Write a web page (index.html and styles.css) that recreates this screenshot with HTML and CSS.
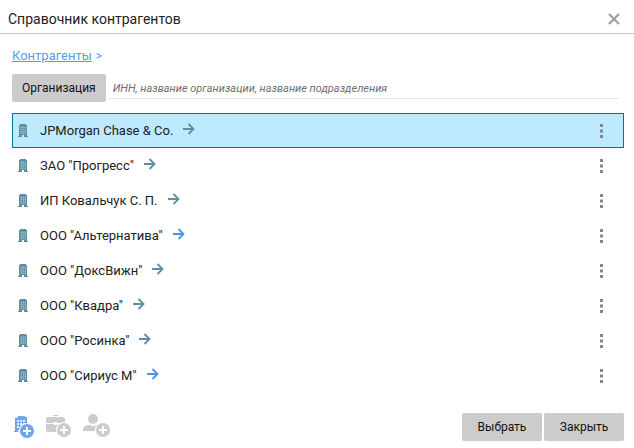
FILE: index.html
```html
<!DOCTYPE html>
<html lang="ru">
<head>
<meta charset="utf-8">
<title>Справочник контрагентов</title>
<link rel="stylesheet" href="styles.css">
</head>
<body>
<svg class="sprite" aria-hidden="true">
  <symbol id="building" viewBox="0 0 10 13">
    <path d="M2 0H8V1H9V12H10V13H6V11H4V13H0V12H1V1H2Z"/>
    <path class="panes" d="M3.500 2V10M5.500 2V10M7.500 2V10M2 3.500H8M2 5.500H8M2 7.500H8M2 9.500H8"/>
  </symbol>
  <symbol id="arrow" viewBox="0 0 12 12">
    <path d="M0 6H10.500M5.500 1L10.500 6L5.500 11"/>
  </symbol>
  <symbol id="dots" viewBox="0 0 3 16">
    <path d="M0 1H3V4H0ZM0 6.500H3V9.500H0ZM0 12H3V15H0Z"/>
  </symbol>
  <symbol id="plus" viewBox="0 0 16 16">
    <circle class="ring" cx="8" cy="8" r="8"/>
    <circle cx="8" cy="8" r="7"/>
    <path class="cross" d="M8 4V12M4 8H12"/>
  </symbol>
</svg>
<main class="dialog">
  <header class="header">
    <h1 class="title">Справочник контрагентов</h1>
    <button class="close" type="button" aria-label="Закрыть окно">
      <svg viewBox="0 0 12 12"><path d="M1 1L11 11M11 1L1 11"/></svg>
    </button>
  </header>
  <div class="content">
    <nav class="crumbs"><a href="#">Контрагенты</a><span>&gt;</span></nav>
    <form class="search">
      <button class="button" type="button">Организация</button>
      <input class="query" type="text" aria-label="Поиск" placeholder="ИНН, название организации, название подразделения">
    </form>
    <ul class="list">
      <li class="row selected"><svg class="building"><use href="#building"/></svg><span class="name">JPMorgan Chase &amp; Co.</span><a class="open" href="#" aria-label="Открыть"><svg><use href="#arrow"/></svg></a><button class="more" type="button" aria-label="Меню"><svg><use href="#dots"/></svg></button></li>
      <li class="row"><svg class="building"><use href="#building"/></svg><span class="name">ЗАО "Прогресс"</span><a class="open" href="#" aria-label="Открыть"><svg><use href="#arrow"/></svg></a><button class="more" type="button" aria-label="Меню"><svg><use href="#dots"/></svg></button></li>
      <li class="row"><svg class="building"><use href="#building"/></svg><span class="name">ИП Ковальчук С. П.</span><a class="open" href="#" aria-label="Открыть"><svg><use href="#arrow"/></svg></a><button class="more" type="button" aria-label="Меню"><svg><use href="#dots"/></svg></button></li>
      <li class="row"><svg class="building"><use href="#building"/></svg><span class="name">ООО "Альтернатива"</span><a class="open nested" href="#" aria-label="Открыть"><svg><use href="#arrow"/></svg></a><button class="more" type="button" aria-label="Меню"><svg><use href="#dots"/></svg></button></li>
      <li class="row"><svg class="building"><use href="#building"/></svg><span class="name">ООО "ДоксВижн"</span><a class="open" href="#" aria-label="Открыть"><svg><use href="#arrow"/></svg></a><button class="more" type="button" aria-label="Меню"><svg><use href="#dots"/></svg></button></li>
      <li class="row"><svg class="building"><use href="#building"/></svg><span class="name">ООО "Квадра"</span><a class="open" href="#" aria-label="Открыть"><svg><use href="#arrow"/></svg></a><button class="more" type="button" aria-label="Меню"><svg><use href="#dots"/></svg></button></li>
      <li class="row"><svg class="building"><use href="#building"/></svg><span class="name">ООО "Росинка"</span><a class="open" href="#" aria-label="Открыть"><svg><use href="#arrow"/></svg></a><button class="more" type="button" aria-label="Меню"><svg><use href="#dots"/></svg></button></li>
      <li class="row"><svg class="building"><use href="#building"/></svg><span class="name">ООО "Сириус М"</span><a class="open nested" href="#" aria-label="Открыть"><svg><use href="#arrow"/></svg></a><button class="more" type="button" aria-label="Меню"><svg><use href="#dots"/></svg></button></li>
    </ul>
  </div>
  <footer class="footer">
    <div class="tools">
      <button class="tool active" type="button" aria-label="Добавить организацию">
        <svg viewBox="-4 0 28 26"><path d="M3 2H4V1H11V2H13V17H0V16H1V3H3Z"/><path class="windows" d="M3 5H5V7H3ZM6 5H8V7H6ZM9 5H11V7H9ZM3 8H5V10H3ZM6 8H8V10H6ZM9 8H11V10H9ZM3 11H5V13H3ZM6 11H8V13H6ZM4 15H6V17H4Z"/><use href="#plus" x="5" y="8" width="16" height="16"/></svg>
      </button>
      <button class="tool" type="button" aria-label="Добавить подразделение" disabled>
        <svg viewBox="0 0 28 26"><path d="M7 0H12V1H7ZM2 2H17Q19 2 19 4V8H11V7H8V8H0V4Q0 2 2 2ZM0 9H8V10H11V9H19V17H2Q0 17 0 15Z"/><use href="#plus" x="10" y="7" width="16" height="16"/></svg>
      </button>
      <button class="tool" type="button" aria-label="Добавить сотрудника" disabled>
        <svg viewBox="-1 0 28 26"><circle cx="10" cy="4" r="5"/><path d="M0 16V14Q1 10 6 10Q10 12 14 10Q18 11 18 16Z"/><use href="#plus" x="12" y="7" width="16" height="16"/></svg>
      </button>
    </div>
    <div class="actions">
      <button class="button" type="button">Выбрать</button>
      <button class="button" type="button">Закрыть</button>
    </div>
  </footer>
</main>
</body>
</html>
```

FILE: styles.css
```css
* { box-sizing: border-box; }
body { margin: 0; background: #fff; color: #212121; font: 13px/18px Roboto, sans-serif; }
button { border: 0; padding: 0; background: none; color: inherit; font: inherit; }
svg { display: block; overflow: visible; fill: currentColor; }
.sprite { position: absolute; width: 0; height: 0; }
.dialog { display: flex; flex-direction: column; min-height: 100vh; }
.header { display: flex; align-items: center; justify-content: space-between; height: 34px; padding: 4px 14px 0 8px; border-bottom: 1px solid #c8c8c8; }
.title { margin: 0; font-size: 14px; font-weight: 400; }
.close { color: #a0a0a0; }
.close svg { width: 12px; height: 12px; stroke: currentColor; stroke-width: 2.3; }
.content { padding: 13px 10px 0 12px; }
.crumbs { display: flex; gap: 4px; color: #5c9ae6; }
.crumbs a { color: inherit; }
.crumbs span { font-size: 12px; }
.search { display: flex; gap: 3px; margin: 9px 5px 11px 0; }
.button { height: 28px; padding: 0 10px; border-radius: 2px; background: #ccc; color: #111; font-size: 12px; white-space: nowrap; }
.query { flex: 1; min-width: 0; height: 25px; padding: 4px 4px 0; border: 0; border-bottom: 1px solid #e4e4e4; outline: 0; background: none; font: italic 11px/16px Roboto, sans-serif; }
.query::placeholder { color: #707070; opacity: 1; }
.list { margin: 0; padding: 0; list-style: none; }
.row { display: flex; align-items: center; height: 35px; padding: 0 20px 0 5px; border: 1px solid transparent; }
.selected { border-color: #066f9a; background: #bdeaff; }
.building { width: 10px; height: 13px; margin-right: 12px; color: #5e8ea2; }
.panes { fill: none; stroke: #fff; stroke-opacity: .2; stroke-width: 1; }
.windows { fill: #fff; fill-opacity: .85; }
.open { margin: 0 auto 3px 10px; color: #5e8ea2; }
.nested { color: #4b91e8; }
.open svg { width: 12px; height: 12px; fill: none; stroke: currentColor; stroke-width: 1.8; }
.more { color: #858585; }
.more svg { width: 3px; height: 16px; }
.footer { display: flex; align-items: flex-end; justify-content: space-between; margin-top: auto; padding: 0 10px 7px 10px; }
.tools { display: flex; gap: 8px; }
.tool { color: #ccc; }
.tool.active { color: #6fa5ea; }
.tool svg { width: 28px; height: 26px; }
.ring { fill: #fff; }
.cross { fill: none; stroke: #fff; stroke-width: 2; }
.actions { display: flex; gap: 2px; }
.actions .button { min-width: 80px; }
```
